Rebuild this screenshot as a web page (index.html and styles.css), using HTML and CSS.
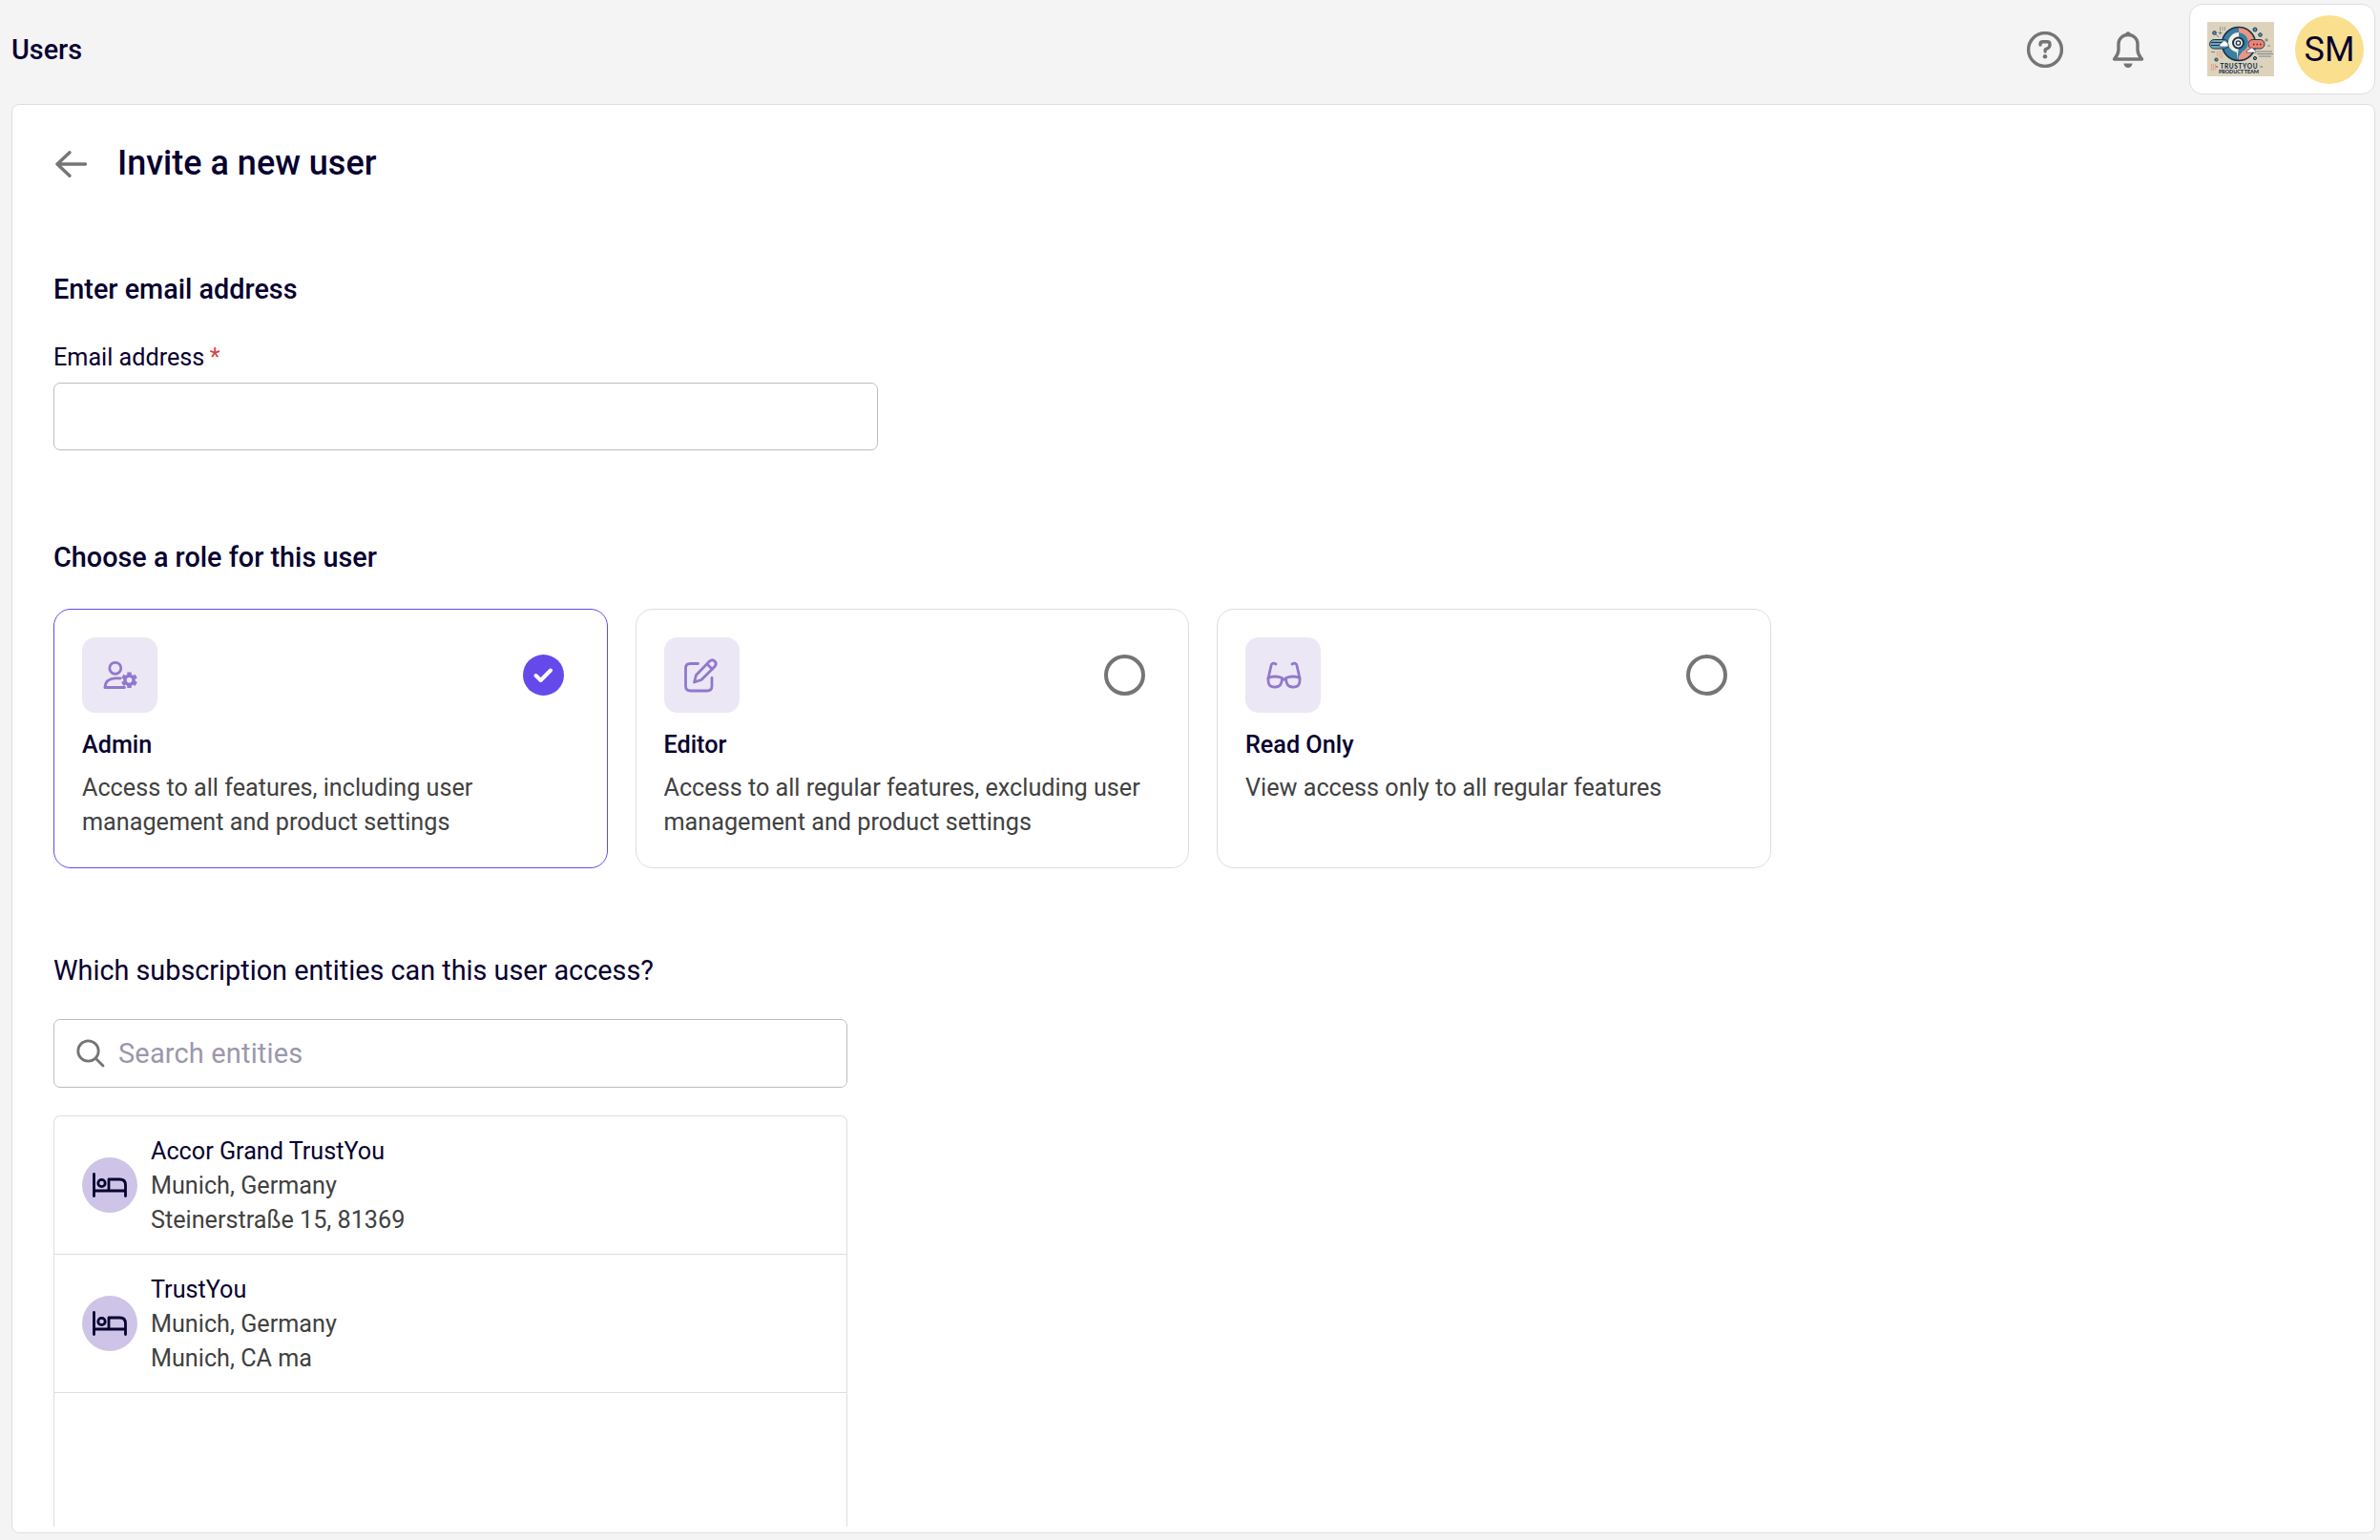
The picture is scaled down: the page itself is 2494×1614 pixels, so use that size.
FILE: index.html
```html
<!DOCTYPE html>
<html lang="en">
  <head>
    <meta charset="UTF-8">
    <title>Users</title>
    <link rel="stylesheet" href="styles.css">
  </head>
  <body>
    <header class="topbar">
      <h1 class="page-title">Users</h1>
      <div class="topbar-actions">
        <svg class="icon-help" viewBox="0 0 38 38">
          <circle cx="19" cy="19" r="17.4"/>
          <path d="M14 14V13.500Q14 10.800 16.700 10.800H21.300Q24 10.800 24 13.500V14.500Q24 16.500 22 17.500L19.200 19V21"/>
          <circle class="dot" cx="19" cy="26.200" r="2.300"/>
        </svg>
        <svg class="icon-bell" viewBox="0 0 34 40">
          <path d="M17 4.500C11 4.500 7 9 7 14V20C7 25 5 27 2.500 30H31.500C29 27 27 25 27 20V14C27 9 23 4.500 17 4.500Z"/>
          <path class="dot" d="M14.500 4.500V2.500Q17 0 19.500 2.500V4.500ZM12.300 34.500H21.700Q20.500 39 17 39T12.300 34.500Z"/>
        </svg>
        <div class="account">
          <svg class="logo" viewBox="0 0 70 57">
            <rect width="70" height="57" fill="#ddd3bd"/>
            <path d="M33 5A18 18 0 0 0 33 41Z" fill="#3b7ea1"/>
            <path d="M33 5A18 18 0 0 1 33 41Z" fill="#ee9480"/>
            <circle cx="33" cy="23" r="17.500" fill="none" stroke="#16344f" stroke-width="1.600"/>
            <rect x="2.500" y="18.500" width="20" height="9.500" rx="4.700" fill="#6ea7bb" stroke="#16344f"/>
            <path d="M4 21.500H16M4 24.500H14" stroke="#16344f"/>
            <rect x="43" y="18.500" width="17" height="9.500" rx="4.700" fill="#ee8371" stroke="#16344f"/>
            <path d="M48 23.400h1.500M51.500 23.400h1.500M55 23.400h1.500" stroke="#16344f" stroke-width="1.500"/>
            <path d="M33 11A10.500 10.500 0 0 1 37 31L31 39V32C24 30 22 25 22 22A11 11 0 0 1 33 11Z" fill="#f7f1e5"/>
            <path d="M33 11A10.500 10.500 0 0 1 37 31L31 39Q34 26 33 11Z" fill="#3b7ea1"/>
            <circle cx="32.500" cy="22" r="5.500" fill="#f7f1e5" stroke="#16344f" stroke-width="2"/>
            <circle cx="32.500" cy="22" r="2.200" fill="none" stroke="#16344f" stroke-width="1.300"/>
            <path d="M13 26Q12 22 15 22Q17 18 20 21Q23 22 22 26Z" fill="#fff" stroke="#16344f" stroke-width=".6"/>
            <path d="M41 32Q41 29 44 29Q47 25 49 29Q52 30 51 32Z" fill="#fff" stroke="#16344f" stroke-width=".6"/>
            <g fill="#5b94ad" stroke="#16344f">
              <circle cx="7.500" cy="11.500" r="1.800"/>
              <circle cx="50" cy="8" r="2"/>
              <circle cx="55.500" cy="13.500" r="1.800"/>
              <circle cx="9.500" cy="39.500" r="1.600"/>
              <circle cx="50" cy="38" r="1.600"/>
            </g>
            <path d="M13.500 9.500V13.500M11.500 11.500H15.500M9 13L12 16M62 17V21M60 19H64M52 31H68M52 33.500H69M54 36H67M4 31.500H8M63 25H66" stroke="#4c6573" stroke-width=".7"/>
            <path d="M13 6H19M13 8H19" stroke="#4c6573" stroke-dasharray="1 1.500"/>
            <path d="M10.500 31V36M13 30V38M15.500 31V38M4.500 44V51M6.500 44V51M8.500 44V50" stroke="#e5a793" stroke-width="1.200"/>
            <text class="logo-name" x="33" y="48.500" textLength="39">TRUSTYOU</text>
            <text class="logo-team" x="33" y="54" textLength="42">PRODUCT TEAM</text>
            <path d="M9 47H11M55.500 47H58" stroke="#16344f" stroke-width=".7"/>
          </svg>
          <span class="avatar">SM</span>
        </div>
      </div>
    </header>

    <main class="panel">
      <div class="panel-header">
        <svg class="icon-back" viewBox="0 0 34 28">
          <path d="M15 1.800L2 14L15 26.200M2 14H31.500"/>
        </svg>
        <h2 class="panel-title">Invite a new user</h2>
      </div>

      <section class="email-section">
        <h3 class="section-title">Enter email address</h3>
        <label for="email" class="email-label">Email address <span class="required">*</span></label>
        <input type="email" id="email" class="email-input">
      </section>

      <section class="role-section">
        <h3 class="section-title">Choose a role for this user</h3>
        <div class="roles">
          <div class="role selected">
            <div class="role-top">
              <span class="role-icon">
                <svg viewBox="0 0 44 44">
                  <circle cx="16.800" cy="14.300" r="6"/>
                  <path d="M22 24.900H16.500Q6.500 25.500 5.900 34.500H26.500"/>
                  <circle cx="31.500" cy="26.800" r="4.600" stroke-width="3.600"/>
                  <path class="gear-teeth" d="M31.500 21V18.500M31.500 32.600V35.100M26.500 23.900L24.300 22.600M36.500 29.700L38.700 31M26.500 29.700L24.300 31M36.500 23.900L38.700 22.600"/>
                </svg>
              </span>
              <span class="radio checked">
                <svg viewBox="0 0 43 43"><path d="M13.500 22L18.700 27L29 16.500"/></svg>
              </span>
            </div>
            <h4 class="role-name">Admin</h4>
            <p class="role-text">Access to all features, including user management and product settings</p>
          </div>
          <div class="role">
            <div class="role-top">
              <span class="role-icon">
                <svg viewBox="0 0 44 44">
                  <path d="M18.500 9.500H10.500Q5.500 9.500 5.500 14.500V33Q5.500 38 10.500 38H28Q33 38 33 33V24.500"/>
                  <path d="M14.500 29L16.500 21.500L30.500 7Q33.500 4.500 36 7Q38.500 9.500 36 12.500L22 26.500ZM28 10L33.500 15.500"/>
                </svg>
              </span>
              <span class="radio"></span>
            </div>
            <h4 class="role-name">Editor</h4>
            <p class="role-text">Access to all regular features, excluding user management and product settings</p>
          </div>
          <div class="role">
            <div class="role-top">
              <span class="role-icon">
                <svg viewBox="0 0 44 44">
                  <path d="M14 10Q9.800 7.500 8.900 12L6 25M31 10Q35.200 7.500 36.100 12L39 25M20.500 26H24.500"/>
                  <path d="M6 24.500Q13 21.500 20.500 24.500Q20.500 34 13.500 34Q6 34.500 6 27.500ZM39 24.500Q32 21.500 24.500 24.500Q24.500 34 31.500 34Q39 34.500 39 27.500Z"/>
                </svg>
              </span>
              <span class="radio"></span>
            </div>
            <h4 class="role-name">Read Only</h4>
            <p class="role-text">View access only to all regular features</p>
          </div>
        </div>
      </section>

      <section class="entity-section">
        <h3 class="section-title light">Which subscription entities can this user access?</h3>
        <div class="search">
          <svg class="icon-search" viewBox="0 0 30 30">
            <circle cx="12.500" cy="12.500" r="10.700"/>
            <path d="M20.500 20.500L28 28"/>
          </svg>
          <input type="text" class="search-input" placeholder="Search entities">
        </div>
        <ul class="entities">
          <li class="entity">
            <span class="entity-icon">
              <svg viewBox="0 0 36 26">
                <path d="M1.500 1.500V24.500M1.500 19H34.500M34.500 24.500V13Q34.500 7 28.500 7H17V19"/>
                <circle cx="9.500" cy="11" r="3.700"/>
              </svg>
            </span>
            <div class="entity-text">
              <p class="entity-name">Accor Grand TrustYou</p>
              <p>Munich, Germany</p>
              <p>Steinerstraße 15, 81369</p>
            </div>
          </li>
          <li class="entity">
            <span class="entity-icon">
              <svg viewBox="0 0 36 26">
                <path d="M1.500 1.500V24.500M1.500 19H34.500M34.500 24.500V13Q34.500 7 28.500 7H17V19"/>
                <circle cx="9.500" cy="11" r="3.700"/>
              </svg>
            </span>
            <div class="entity-text">
              <p class="entity-name">TrustYou</p>
              <p>Munich, Germany</p>
              <p>Munich, CA ma</p>
            </div>
          </li>
        </ul>
      </section>
    </main>
  </body>
</html>
```

FILE: styles.css
```css
* {
    box-sizing: border-box;
    margin: 0;
    padding: 0;
}

body {
    display: flex;
    flex-direction: column;
    height: 1614px;
    padding: 4px 5px 7px 12px;
    overflow: hidden;
    font-family: Roboto, sans-serif;
    font-size: 25.2px;
    line-height: 36px;
    color: #414141;
    background-color: #f4f4f4;
}

svg {
    display: block;
    fill: none;
    stroke-linecap: round;
    stroke-linejoin: round;
}

/* top bar */
.topbar {
    display: flex;
    justify-content: space-between;
    align-items: center;
    height: 95px;
    margin-bottom: 10px;
}

.page-title {
    font-size: 28.8px;
    font-weight: 500;
    color: #07002f;
}

.topbar-actions {
    display: flex;
    align-items: center;
}

.icon-help,
.icon-bell {
    stroke: #757575;
    stroke-width: 3.4;
}

.icon-help {
    width: 38px;
    height: 38px;
    margin-right: 51px;
}

.icon-bell {
    width: 34px;
    height: 40px;
    margin-right: 47px;
}

.dot {
    fill: #757575;
    stroke: none;
}

.account {
    display: flex;
    align-items: center;
    gap: 22px;
    width: 195px;
    height: 95px;
    padding-left: 18px;
    border: 1px solid #dedede;
    border-radius: 14px;
    background-color: #fff;
}

.logo {
    width: 70px;
    height: 57px;
    stroke-linecap: butt;
}

.logo-name,
.logo-team {
    font-family: Lato, sans-serif;
    font-weight: 900;
    text-anchor: middle;
    fill: #16344f;
}

.logo-name {
    font-size: 6.5px;
}

.logo-team {
    font-size: 5.5px;
}

.avatar {
    width: 72px;
    height: 72px;
    border-radius: 50%;
    font-size: 36px;
    line-height: 72px;
    text-align: center;
    color: #07002f;
    background-color: #fae08e;
}

/* main panel */
.panel {
    display: flex;
    flex: 1;
    flex-direction: column;
    min-height: 0;
    padding: 32px 43px 6px;
    border: 1px solid #dedede;
    border-radius: 8px;
    background-color: #fff;
}

.panel-header {
    display: flex;
    align-items: center;
    gap: 31px;
    padding-left: 2px;
    height: 60px;
    margin-bottom: 80px;
}

.icon-back {
    width: 34px;
    height: 28px;
    stroke: #757575;
    stroke-width: 3.4;
}

.panel-title {
    padding-bottom: 2px;
    font-size: 36px;
    font-weight: 500;
    color: #07002f;
}

.section-title {
    font-size: 28.8px;
    font-weight: 500;
    line-height: 43px;
    color: #07002f;
}

.section-title.light {
    font-weight: 400;
}

.email-label {
    display: block;
    margin: 32px 0 8px;
    color: #07002f;
}

.required {
    margin-left: -1px;
    color: #d64541;
}

.email-input {
    display: block;
    width: 864px;
    height: 71px;
    border: 1px solid #bdbdbd;
    border-radius: 7px;
}

/* role cards */
.role-section {
    margin-top: 91px;
}

.roles {
    display: flex;
    gap: 29px;
    margin-top: 32px;
}

.role {
    width: 580.5px;
    height: 272px;
    padding: 29px;
    border: 1px solid #dedede;
    border-radius: 18px;
}

.role.selected {
    border-color: #6549eb;
}

.role-top {
    display: flex;
    justify-content: space-between;
    align-items: center;
    padding-right: 16px;
}

.role-icon {
    display: flex;
    align-items: center;
    justify-content: center;
    width: 79px;
    height: 79px;
    border-radius: 14px;
    background-color: #ebe7f5;
}

.role-icon svg {
    width: 44px;
    height: 44px;
    stroke: #9178cc;
    stroke-width: 2.8;
}

.role-icon .gear-teeth {
    stroke-width: 4.4;
    stroke-linecap: butt;
}

.radio {
    width: 43px;
    height: 43px;
    border: 4px solid #757575;
    border-radius: 50%;
}

.radio.checked {
    border: none;
    background-color: #6549eb;
}

.radio svg {
    stroke: #fff;
    stroke-width: 4;
}

.role-name {
    margin: 16px 0 9px;
    font-size: 25.2px;
    font-weight: 500;
    color: #07002f;
}

/* entity picker */
.entity-section {
    display: flex;
    flex: 1;
    flex-direction: column;
    width: 832px;
    margin-top: 86px;
}

.search {
    display: flex;
    align-items: center;
    gap: 14px;
    height: 72px;
    margin: 29px 0;
    padding: 0 23px;
    border: 1px solid #bdbdbd;
    border-radius: 7px;
}

.icon-search {
    width: 30px;
    height: 30px;
    stroke: #757575;
    stroke-width: 2.8;
}

.search-input {
    flex: 1;
    border: none;
    outline: none;
    font-family: inherit;
    font-size: 29px;
    letter-spacing: 0.15px;
    background: none;
}

.search-input::placeholder {
    color: #9c97ac;
}

.entities {
    flex: 1;
    border: 1px solid #dedede;
    border-bottom: none;
    border-radius: 7px 7px 0 0;
    list-style: none;
}

.entity {
    display: flex;
    align-items: center;
    gap: 14px;
    height: 145px;
    padding: 0 29px;
    border-bottom: 1px solid #dedede;
}

.entity-icon {
    display: flex;
    align-items: center;
    justify-content: center;
    width: 58px;
    height: 58px;
    border-radius: 50%;
    background-color: #cec4e7;
}

.entity-icon svg {
    width: 36px;
    height: 26px;
    stroke: #07002f;
    stroke-width: 2.8;
}

.entity-text {
    padding-top: 2px;
}

.entity-name {
    color: #07002f;
}
```
